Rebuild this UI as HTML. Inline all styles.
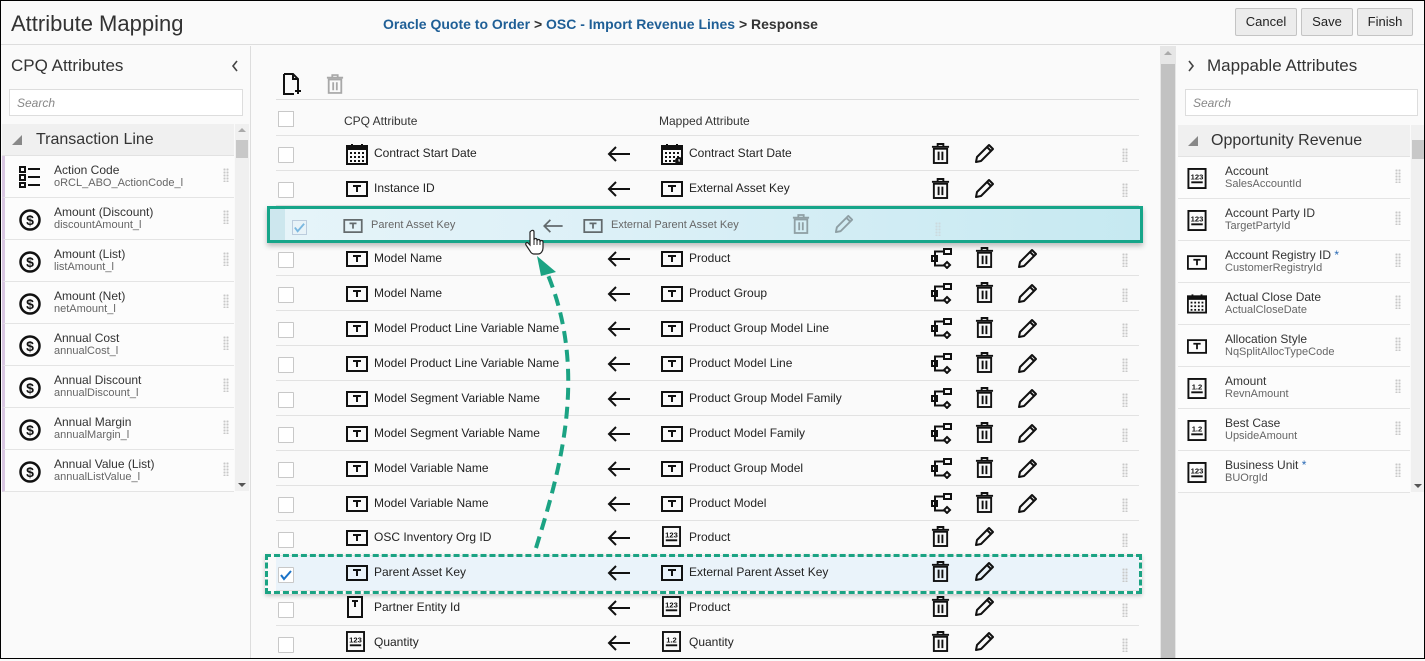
<!DOCTYPE html>
<html><head><meta charset="utf-8">
<style>
*{box-sizing:border-box;margin:0;padding:0}
body{width:1425px;height:659px;overflow:hidden;font-family:"Liberation Sans",Arial,sans-serif;background:#fafafa;position:relative;color:#222}
.frame{position:absolute;left:0;top:0;width:1425px;height:659px;border:1px solid #000;pointer-events:none;z-index:50}
.a{position:absolute}
.hdr{left:0;top:0;width:1425px;height:45px;background:#fafafa;border-bottom:1px solid #ddd}
.btn{position:absolute;top:8px;height:28px;border:1px solid #c4c4c4;background:#ececec;border-radius:2px;font-size:13px;line-height:26px;text-align:center;color:#222}
.lp{left:0;top:46px;width:251px;height:613px;border-right:1px solid #ddd;background:#fafafa}
.rp{left:1176px;top:46px;width:249px;height:613px;background:#fafafa}
.search{position:absolute;height:27px;border:1px solid #ddd;background:#fff;font-size:12px;font-style:italic;color:#888;padding:6px 7px}
.sec{position:absolute;height:32px;background:#f0f0f0;border-bottom:1px solid #e2e2e2;font-size:16px;color:#333;line-height:31px}
.item{position:absolute;height:42px;border-bottom:1px solid #e4e4e4;background:#fcfcfc}
.item .t1{position:absolute;top:7px;font-size:12px;color:#333}
.item .t2{position:absolute;top:21px;font-size:11px;color:#666}
.item svg{position:absolute}
.grip{position:absolute;width:6px;height:14px;background-image:radial-gradient(circle,#c8c8c8 1px,transparent 1.2px);background-size:3px 3px}
.row{position:absolute;left:276px;width:863px;height:35px;border-bottom:1px solid #e2e2e2}
.cb{position:absolute;left:2px;top:11px;width:16px;height:16px;border:1px solid #c8c8c8;background:#fff;border-radius:1px}
.txt{position:absolute;top:10px;font-size:12px;color:#222;white-space:nowrap}
.row svg{position:absolute}
.star{color:#2a6ab5}
</style></head><body>
<svg width="0" height="0" style="position:absolute">
<defs>
<symbol id="T" viewBox="0 0 22 16"><rect x="1" y="1" width="20" height="14" fill="none" stroke="#111" stroke-width="2"/><path d="M7 5h8M11 5v6" stroke="#111" stroke-width="2"/></symbol>
<symbol id="TT" viewBox="0 0 16 22"><rect x="1" y="1" width="14" height="20" fill="none" stroke="#111" stroke-width="2"/><path d="M5 5h6M8 5v6" stroke="#111" stroke-width="2"/></symbol>
<symbol id="cal" viewBox="0 0 22 22"><rect x="1" y="3" width="20" height="18" fill="none" stroke="#111" stroke-width="2"/><rect x="1" y="3" width="20" height="4" fill="#111"/><path d="M6 1v4M16 1v4" stroke="#111" stroke-width="2"/><g fill="#111"><rect x="4" y="9" width="2" height="2"/><rect x="8" y="9" width="2" height="2"/><rect x="12" y="9" width="2" height="2"/><rect x="16" y="9" width="2" height="2"/><rect x="4" y="13" width="2" height="2"/><rect x="8" y="13" width="2" height="2"/><rect x="12" y="13" width="2" height="2"/><rect x="16" y="13" width="2" height="2"/><rect x="4" y="17" width="2" height="2"/><rect x="8" y="17" width="2" height="2"/><rect x="12" y="17" width="2" height="2"/><rect x="16" y="17" width="2" height="2"/></g></symbol>
<symbol id="calc" viewBox="0 0 22 22"><use href="#cal"/><circle cx="18" cy="18" r="4" fill="#111"/><path d="M18 16v2h1" stroke="#fff" stroke-width="1"/></symbol>
<symbol id="n123" viewBox="0 0 20 22"><rect x="1" y="1" width="18" height="20" fill="none" stroke="#111" stroke-width="2"/><text x="10" y="12" font-size="8" font-family="Liberation Sans" text-anchor="middle" font-weight="bold" fill="#111">123</text><path d="M4 15h12" stroke="#111" stroke-width="2"/></symbol>
<symbol id="n12" viewBox="0 0 20 22"><rect x="1" y="1" width="18" height="20" fill="none" stroke="#111" stroke-width="2"/><text x="10" y="12" font-size="8" font-family="Liberation Sans" text-anchor="middle" font-weight="bold" fill="#111">1.2</text><path d="M4 15h12" stroke="#111" stroke-width="2"/></symbol>
<symbol id="trash" viewBox="0 0 20 22"><path d="M1 4h18M7 4V1h6v3" fill="none" stroke="#111" stroke-width="2"/><rect x="3" y="6" width="14" height="15" fill="none" stroke="#111" stroke-width="2"/><path d="M8 9v9M12 9v9" stroke="#111" stroke-width="2"/></symbol>
<symbol id="pen" viewBox="0 0 22 22"><path d="M2 20l1-5L15 3l4 4L7 19z M13 5l4 4" fill="none" stroke="#111" stroke-width="2" stroke-linejoin="round"/></symbol>
<symbol id="tree" viewBox="0 0 22 22"><rect x="13" y="2" width="7" height="5" fill="none" stroke="#111" stroke-width="2"/><path d="M13 4.5H4v14h9" fill="none" stroke="#111" stroke-width="2"/><rect x="1" y="9" width="5" height="5" fill="none" stroke="#111" stroke-width="2"/><path d="M16 15l3 3-3 3-3-3z" fill="none" stroke="#111" stroke-width="2"/></symbol>
<symbol id="arr" viewBox="0 0 24 16"><path d="M23 8H2M9 1L2 8l7 7" fill="none" stroke="#111" stroke-width="2"/></symbol>
<symbol id="dol" viewBox="0 0 22 22"><circle cx="11" cy="11" r="9.5" fill="none" stroke="#111" stroke-width="2.5"/><text x="11" y="16" font-size="14" font-weight="bold" font-family="Liberation Sans" text-anchor="middle" fill="#111">$</text></symbol>
<symbol id="list" viewBox="0 0 22 22"><g fill="none" stroke="#111" stroke-width="2"><rect x="1" y="1" width="5" height="5"/><rect x="1" y="9" width="5" height="5"/><rect x="1" y="17" width="5" height="4"/><path d="M9 3h12M9 11h12M9 19h12"/></g></symbol>
</defs></svg>

<div class="a hdr">
 <div class="a" style="left:11px;top:11px;font-size:22px;color:#333">Attribute Mapping</div>
 <div class="a" style="left:383px;top:16px;font-size:14px;font-weight:bold;color:#1f5f96">Oracle Quote to Order <span style="color:#333">&gt;</span> OSC - Import Revenue Lines <span style="color:#333">&gt; Response</span></div>
 <div class="btn" style="left:1235px;width:62px">Cancel</div>
 <div class="btn" style="left:1301px;width:52px">Save</div>
 <div class="btn" style="left:1357px;width:56px">Finish</div>
</div>

<div class="a lp">
 <div class="a" style="left:11px;top:10px;font-size:17px;color:#333">CPQ Attributes</div>
 <svg class="a" style="left:231px;top:14px" width="8" height="12" viewBox="0 0 8 12"><path d="M6 1L2 6l4 5" fill="none" stroke="#444" stroke-width="1.6"/></svg>
 <div class="search" style="left:9px;top:43px;width:234px">Search</div>
 <div class="sec" style="left:2px;top:78px;width:232px"><span style="position:absolute;left:10px;top:11px;width:0;height:0;border-left:10px solid transparent;border-bottom:10px solid #888"></span><span style="position:absolute;left:34px">Transaction Line</span></div>
 <div class="a" style="left:235px;top:78px;width:14px;height:367px;background:#f0f0f0"></div>
 <div class="a" style="left:236px;top:94px;width:12px;height:18px;background:#c8c8c8"></div>
 <div class="a" style="left:238px;top:82px;width:0;height:0;border:4px solid transparent;border-bottom-color:#aaa;border-top:none"></div>
 <div class="a" style="left:238px;top:437px;width:0;height:0;border:4px solid transparent;border-top-color:#555;border-bottom:none"></div>
</div>
<!-- left items -->
<div class="item" style="left:2px;top:156px;width:232px;border-left:3px solid #d9c7e2"><svg style="left:14px;top:10px" width="22" height="22"><use href="#list"/></svg><div class="t1" style="left:49px">Action Code</div><div class="t2" style="left:49px">oRCL_ABO_ActionCode_l</div><div class="grip" style="left:218px;top:12px"></div></div>
<div class="item" style="left:2px;top:198px;width:232px;border-left:3px solid #d9c7e2"><svg style="left:14px;top:11px" width="22" height="22"><use href="#dol"/></svg><div class="t1" style="left:49px">Amount (Discount)</div><div class="t2" style="left:49px">discountAmount_l</div><div class="grip" style="left:218px;top:12px"></div></div>
<div class="item" style="left:2px;top:240px;width:232px;border-left:3px solid #d9c7e2"><svg style="left:14px;top:11px" width="22" height="22"><use href="#dol"/></svg><div class="t1" style="left:49px">Amount (List)</div><div class="t2" style="left:49px">listAmount_l</div><div class="grip" style="left:218px;top:12px"></div></div>
<div class="item" style="left:2px;top:282px;width:232px;border-left:3px solid #d9c7e2"><svg style="left:14px;top:11px" width="22" height="22"><use href="#dol"/></svg><div class="t1" style="left:49px">Amount (Net)</div><div class="t2" style="left:49px">netAmount_l</div><div class="grip" style="left:218px;top:12px"></div></div>
<div class="item" style="left:2px;top:324px;width:232px;border-left:3px solid #d9c7e2"><svg style="left:14px;top:11px" width="22" height="22"><use href="#dol"/></svg><div class="t1" style="left:49px">Annual Cost</div><div class="t2" style="left:49px">annualCost_l</div><div class="grip" style="left:218px;top:12px"></div></div>
<div class="item" style="left:2px;top:366px;width:232px;border-left:3px solid #d9c7e2"><svg style="left:14px;top:11px" width="22" height="22"><use href="#dol"/></svg><div class="t1" style="left:49px">Annual Discount</div><div class="t2" style="left:49px">annualDiscount_l</div><div class="grip" style="left:218px;top:12px"></div></div>
<div class="item" style="left:2px;top:408px;width:232px;border-left:3px solid #d9c7e2"><svg style="left:14px;top:11px" width="22" height="22"><use href="#dol"/></svg><div class="t1" style="left:49px">Annual Margin</div><div class="t2" style="left:49px">annualMargin_l</div><div class="grip" style="left:218px;top:12px"></div></div>
<div class="item" style="left:2px;top:450px;width:232px;border-left:3px solid #d9c7e2"><svg style="left:14px;top:11px" width="22" height="22"><use href="#dol"/></svg><div class="t1" style="left:49px">Annual Value (List)</div><div class="t2" style="left:49px">annualListValue_l</div><div class="grip" style="left:218px;top:12px"></div></div>

<!-- center -->
<svg class="a" style="left:282px;top:73px" width="20" height="22" viewBox="0 0 20 22"><path d="M2 1h9l5 5v9M11 1v5h5M2 1v20h10" fill="none" stroke="#111" stroke-width="2"/><path d="M16 15v6M13 18h6" stroke="#111" stroke-width="2"/></svg>
<svg class="a" style="left:326px;top:74px;opacity:.35" width="18" height="20" viewBox="0 0 20 22"><use href="#trash"/></svg>
<div class="a" style="left:276px;top:99px;width:863px;height:1px;background:#ddd"></div>
<div class="a" style="left:278px;top:111px;width:16px;height:16px;border:1px solid #c8c8c8;background:#fff"></div>
<div class="a" style="left:344px;top:114px;font-size:12px;color:#333">CPQ Attribute</div>
<div class="a" style="left:659px;top:114px;font-size:12px;color:#333">Mapped Attribute</div>
<div class="a" style="left:276px;top:135px;width:863px;height:1px;background:#e2e2e2"></div>

<div class="row" style="top:136px"><div class="cb"></div><svg style="left:70px;top:7px" width="22" height="22"><use href="#cal"/></svg><div class="txt" style="left:98px">Contract Start Date</div><svg style="left:331px;top:10px" width="24" height="16"><use href="#arr"/></svg><svg style="left:385px;top:7px" width="22" height="22"><use href="#calc"/></svg><div class="txt" style="left:413px">Contract Start Date</div><svg style="left:655px;top:7px" width="19" height="21"><use href="#trash"/></svg><svg style="left:698px;top:6px" width="22" height="22"><use href="#pen"/></svg><div class="grip" style="left:846px;top:12px"></div></div>
<div class="row" style="top:171px"><div class="cb"></div><svg style="left:70px;top:10px" width="22" height="16"><use href="#T"/></svg><div class="txt" style="left:98px">Instance ID</div><svg style="left:331px;top:10px" width="24" height="16"><use href="#arr"/></svg><svg style="left:385px;top:10px" width="22" height="16"><use href="#T"/></svg><div class="txt" style="left:413px">External Asset Key</div><svg style="left:655px;top:7px" width="19" height="21"><use href="#trash"/></svg><svg style="left:698px;top:6px" width="22" height="22"><use href="#pen"/></svg><div class="grip" style="left:846px;top:12px"></div></div>

<div class="row" style="top:241px"><div class="cb"></div><svg style="left:70px;top:10px" width="22" height="16"><use href="#T"/></svg><div class="txt" style="left:98px">Model Name</div><svg style="left:331px;top:10px" width="24" height="16"><use href="#arr"/></svg><svg style="left:385px;top:10px" width="22" height="16"><use href="#T"/></svg><div class="txt" style="left:413px">Product</div><svg style="left:655px;top:6px" width="22" height="22"><use href="#tree"/></svg><svg style="left:699px;top:6px" width="19" height="21"><use href="#trash"/></svg><svg style="left:741px;top:6px" width="22" height="22"><use href="#pen"/></svg><div class="grip" style="left:846px;top:12px"></div></div>
<div class="row" style="top:276px"><div class="cb"></div><svg style="left:70px;top:10px" width="22" height="16"><use href="#T"/></svg><div class="txt" style="left:98px">Model Name</div><svg style="left:331px;top:10px" width="24" height="16"><use href="#arr"/></svg><svg style="left:385px;top:10px" width="22" height="16"><use href="#T"/></svg><div class="txt" style="left:413px">Product Group</div><svg style="left:655px;top:6px" width="22" height="22"><use href="#tree"/></svg><svg style="left:699px;top:6px" width="19" height="21"><use href="#trash"/></svg><svg style="left:741px;top:6px" width="22" height="22"><use href="#pen"/></svg><div class="grip" style="left:846px;top:12px"></div></div>
<div class="row" style="top:311px"><div class="cb"></div><svg style="left:70px;top:10px" width="22" height="16"><use href="#T"/></svg><div class="txt" style="left:98px">Model Product Line Variable Name</div><svg style="left:331px;top:10px" width="24" height="16"><use href="#arr"/></svg><svg style="left:385px;top:10px" width="22" height="16"><use href="#T"/></svg><div class="txt" style="left:413px">Product Group Model Line</div><svg style="left:655px;top:6px" width="22" height="22"><use href="#tree"/></svg><svg style="left:699px;top:6px" width="19" height="21"><use href="#trash"/></svg><svg style="left:741px;top:6px" width="22" height="22"><use href="#pen"/></svg><div class="grip" style="left:846px;top:12px"></div></div>
<div class="row" style="top:346px"><div class="cb"></div><svg style="left:70px;top:10px" width="22" height="16"><use href="#T"/></svg><div class="txt" style="left:98px">Model Product Line Variable Name</div><svg style="left:331px;top:10px" width="24" height="16"><use href="#arr"/></svg><svg style="left:385px;top:10px" width="22" height="16"><use href="#T"/></svg><div class="txt" style="left:413px">Product Model Line</div><svg style="left:655px;top:6px" width="22" height="22"><use href="#tree"/></svg><svg style="left:699px;top:6px" width="19" height="21"><use href="#trash"/></svg><svg style="left:741px;top:6px" width="22" height="22"><use href="#pen"/></svg><div class="grip" style="left:846px;top:12px"></div></div>
<div class="row" style="top:381px"><div class="cb"></div><svg style="left:70px;top:10px" width="22" height="16"><use href="#T"/></svg><div class="txt" style="left:98px">Model Segment Variable Name</div><svg style="left:331px;top:10px" width="24" height="16"><use href="#arr"/></svg><svg style="left:385px;top:10px" width="22" height="16"><use href="#T"/></svg><div class="txt" style="left:413px">Product Group Model Family</div><svg style="left:655px;top:6px" width="22" height="22"><use href="#tree"/></svg><svg style="left:699px;top:6px" width="19" height="21"><use href="#trash"/></svg><svg style="left:741px;top:6px" width="22" height="22"><use href="#pen"/></svg><div class="grip" style="left:846px;top:12px"></div></div>
<div class="row" style="top:416px"><div class="cb"></div><svg style="left:70px;top:10px" width="22" height="16"><use href="#T"/></svg><div class="txt" style="left:98px">Model Segment Variable Name</div><svg style="left:331px;top:10px" width="24" height="16"><use href="#arr"/></svg><svg style="left:385px;top:10px" width="22" height="16"><use href="#T"/></svg><div class="txt" style="left:413px">Product Model Family</div><svg style="left:655px;top:6px" width="22" height="22"><use href="#tree"/></svg><svg style="left:699px;top:6px" width="19" height="21"><use href="#trash"/></svg><svg style="left:741px;top:6px" width="22" height="22"><use href="#pen"/></svg><div class="grip" style="left:846px;top:12px"></div></div>
<div class="row" style="top:451px"><div class="cb"></div><svg style="left:70px;top:10px" width="22" height="16"><use href="#T"/></svg><div class="txt" style="left:98px">Model Variable Name</div><svg style="left:331px;top:10px" width="24" height="16"><use href="#arr"/></svg><svg style="left:385px;top:10px" width="22" height="16"><use href="#T"/></svg><div class="txt" style="left:413px">Product Group Model</div><svg style="left:655px;top:6px" width="22" height="22"><use href="#tree"/></svg><svg style="left:699px;top:6px" width="19" height="21"><use href="#trash"/></svg><svg style="left:741px;top:6px" width="22" height="22"><use href="#pen"/></svg><div class="grip" style="left:846px;top:12px"></div></div>
<div class="row" style="top:486px"><div class="cb"></div><svg style="left:70px;top:10px" width="22" height="16"><use href="#T"/></svg><div class="txt" style="left:98px">Model Variable Name</div><svg style="left:331px;top:10px" width="24" height="16"><use href="#arr"/></svg><svg style="left:385px;top:10px" width="22" height="16"><use href="#T"/></svg><div class="txt" style="left:413px">Product Model</div><svg style="left:655px;top:6px" width="22" height="22"><use href="#tree"/></svg><svg style="left:699px;top:6px" width="19" height="21"><use href="#trash"/></svg><svg style="left:741px;top:6px" width="22" height="22"><use href="#pen"/></svg><div class="grip" style="left:846px;top:12px"></div></div>
<div class="row" style="top:521px"><div class="cb"></div><svg style="left:70px;top:9px" width="22" height="16"><use href="#T"/></svg><div class="txt" style="left:98px;top:9px">OSC Inventory Org ID</div><svg style="left:331px;top:9px" width="24" height="16"><use href="#arr"/></svg><svg style="left:386px;top:5px" width="19" height="21"><use href="#n123"/></svg><div class="txt" style="left:413px;top:9px">Product</div><svg style="left:655px;top:5px" width="19" height="21"><use href="#trash"/></svg><svg style="left:698px;top:4px" width="22" height="22"><use href="#pen"/></svg><div class="grip" style="left:846px;top:12px"></div></div>
<div class="row" style="top:556px;background:#eaf3fa"><div class="cb" style="border-color:#c8c8c8"><svg width="14" height="14" viewBox="0 0 14 14" style="left:0;top:0"><path d="M2 7l3 4 7-8" fill="none" stroke="#1a73c8" stroke-width="2"/></svg></div><svg style="left:70px;top:9px" width="22" height="16"><use href="#T"/></svg><div class="txt" style="left:98px;top:9px">Parent Asset Key</div><svg style="left:331px;top:9px" width="24" height="16"><use href="#arr"/></svg><svg style="left:385px;top:9px" width="22" height="16"><use href="#T"/></svg><div class="txt" style="left:413px;top:9px">External Parent Asset Key</div><svg style="left:655px;top:5px" width="19" height="21"><use href="#trash"/></svg><svg style="left:698px;top:4px" width="22" height="22"><use href="#pen"/></svg><div class="grip" style="left:846px;top:12px"></div></div>
<div class="row" style="top:591px"><div class="cb"></div><svg style="left:71px;top:5px" width="16" height="22"><use href="#TT"/></svg><div class="txt" style="left:98px;top:9px">Partner Entity Id</div><svg style="left:331px;top:9px" width="24" height="16"><use href="#arr"/></svg><svg style="left:386px;top:5px" width="19" height="21"><use href="#n123"/></svg><div class="txt" style="left:413px;top:9px">Product</div><svg style="left:655px;top:5px" width="19" height="21"><use href="#trash"/></svg><svg style="left:698px;top:4px" width="22" height="22"><use href="#pen"/></svg><div class="grip" style="left:846px;top:12px"></div></div>
<div class="row" style="top:626px;border-bottom:none"><div class="cb"></div><svg style="left:70px;top:5px" width="19" height="21"><use href="#n123"/></svg><div class="txt" style="left:98px;top:9px">Quantity</div><svg style="left:331px;top:9px" width="24" height="16"><use href="#arr"/></svg><svg style="left:386px;top:5px" width="19" height="21"><use href="#n12"/></svg><div class="txt" style="left:413px;top:9px">Quantity</div><svg style="left:655px;top:5px" width="19" height="21"><use href="#trash"/></svg><svg style="left:698px;top:4px" width="22" height="22"><use href="#pen"/></svg><div class="grip" style="left:846px;top:12px"></div></div>

<div class="a" style="left:265px;top:554px;width:877px;height:40px;border:3px dashed #1ba383;box-shadow:0 2px 4px rgba(0,0,0,.2)"></div>

<div class="a" style="left:267px;top:206px;width:876px;height:37px;border:3px solid #16a589;background:linear-gradient(90deg,#e6f4f9 0%,#dcf0f7 40%,#c6e9f1 100%);box-shadow:0 3px 5px rgba(0,0,0,.25)">
 <div class="a" style="left:0;top:0;width:15px;height:31px;background:#cde7ee"></div>
 <div class="a" style="left:22px;top:11px;width:15px;height:15px;border:1px solid #bcd;background:#e8f3f8"><svg width="13" height="13" viewBox="0 0 14 14" style="position:absolute;left:0;top:0"><path d="M2 7l3 4 7-8" fill="none" stroke="#7ab8e0" stroke-width="2"/></svg></div>
 <svg style="position:absolute;left:73px;top:10px;opacity:.6" width="20" height="14"><use href="#T"/></svg>
 <div class="a" style="left:101px;top:10px;font-size:11px;color:#666">Parent Asset Key</div>
 <svg style="position:absolute;left:272px;top:10px;opacity:.6" width="22" height="14"><use href="#arr"/></svg>
 <svg style="position:absolute;left:313px;top:10px;opacity:.6" width="20" height="14"><use href="#T"/></svg>
 <div class="a" style="left:341px;top:10px;font-size:11px;color:#666">External Parent Asset Key</div>
 <svg style="position:absolute;left:522px;top:5px;opacity:.35" width="18" height="20"><use href="#trash"/></svg>
 <svg style="position:absolute;left:564px;top:4px;opacity:.35" width="21" height="21"><use href="#pen"/></svg>
 <div class="grip" style="left:665px;top:13px;opacity:.5"></div>
</div>

<svg class="a" style="left:500px;top:240px" width="100" height="320" viewBox="500 240 100 320">
 <path d="M536 548 C560 470 590 370 545 268" fill="none" stroke="#1ba383" stroke-width="4" stroke-dasharray="12 7"/>
 <path d="M537 256 L556 272 L541 276 Z" fill="#1ba383"/>
</svg>
<svg class="a" style="left:525px;top:229px" width="20" height="26" viewBox="0 0 20 26"><path d="M6 2c1-1 3-1 3 1v8c0-2 3-2 3 0v1c0-2 3-2 3 0v1c0-2 3-2 3 0v6c0 3-2 6-5 6H9c-2 0-3-1-4-3l-4-6c-1-2 1-3 2-2l2 2V3z" fill="#fff" stroke="#222" stroke-width="1.2"/><path d="M9 11v5M12 12v4M15 13v3" stroke="#222" stroke-width="1"/></svg>

<div class="a" style="left:1160px;top:46px;width:16px;height:613px;background:#e6e6e6"></div>
<div class="a" style="left:1161px;top:64px;width:14px;height:595px;background:#c2c2c2"></div>
<div class="a" style="left:1164px;top:51px;width:0;height:0;border:4px solid transparent;border-bottom-color:#aaa;border-top:none"></div>

<div class="a rp">
 <svg class="a" style="left:11px;top:14px" width="8" height="12" viewBox="0 0 8 12"><path d="M2 1l4 5-4 5" fill="none" stroke="#444" stroke-width="1.6"/></svg>
 <div class="a" style="left:31px;top:10px;font-size:17px;color:#333">Mappable Attributes</div>
 <div class="search" style="left:9px;top:43px;width:233px">Search</div>
 <div class="sec" style="left:2px;top:79px;width:232px"><span style="position:absolute;left:10px;top:11px;width:0;height:0;border-left:10px solid transparent;border-bottom:10px solid #888"></span><span style="position:absolute;left:33px">Opportunity Revenue</span></div>
 <div class="a" style="left:235px;top:79px;width:14px;height:367px;background:#f0f0f0"></div>
 <div class="a" style="left:236px;top:94px;width:12px;height:19px;background:#c8c8c8"></div>
 <div class="a" style="left:238px;top:438px;width:0;height:0;border:4px solid transparent;border-top-color:#555;border-bottom:none"></div>
</div>
<div class="item" style="left:1178px;top:157px;width:232px"><svg style="left:9px;top:11px" width="20" height="21"><use href="#n123"/></svg><div class="t1" style="left:47px">Account</div><div class="t2" style="left:47px">SalesAccountId</div><div class="grip" style="left:217px;top:12px"></div></div>
<div class="item" style="left:1178px;top:199px;width:232px"><svg style="left:9px;top:11px" width="20" height="21"><use href="#n123"/></svg><div class="t1" style="left:47px">Account Party ID</div><div class="t2" style="left:47px">TargetPartyId</div><div class="grip" style="left:217px;top:12px"></div></div>
<div class="item" style="left:1178px;top:241px;width:232px"><svg style="left:9px;top:14px" width="20" height="15"><use href="#T"/></svg><div class="t1" style="left:47px">Account Registry ID <span class="star">*</span></div><div class="t2" style="left:47px">CustomerRegistryId</div><div class="grip" style="left:217px;top:12px"></div></div>
<div class="item" style="left:1178px;top:283px;width:232px"><svg style="left:9px;top:10px" width="20" height="21"><use href="#cal"/></svg><div class="t1" style="left:47px">Actual Close Date</div><div class="t2" style="left:47px">ActualCloseDate</div><div class="grip" style="left:217px;top:12px"></div></div>
<div class="item" style="left:1178px;top:325px;width:232px"><svg style="left:9px;top:14px" width="20" height="15"><use href="#T"/></svg><div class="t1" style="left:47px">Allocation Style</div><div class="t2" style="left:47px">NqSplitAllocTypeCode</div><div class="grip" style="left:217px;top:12px"></div></div>
<div class="item" style="left:1178px;top:367px;width:232px"><svg style="left:9px;top:11px" width="20" height="21"><use href="#n12"/></svg><div class="t1" style="left:47px">Amount</div><div class="t2" style="left:47px">RevnAmount</div><div class="grip" style="left:217px;top:12px"></div></div>
<div class="item" style="left:1178px;top:409px;width:232px"><svg style="left:9px;top:11px" width="20" height="21"><use href="#n12"/></svg><div class="t1" style="left:47px">Best Case</div><div class="t2" style="left:47px">UpsideAmount</div><div class="grip" style="left:217px;top:12px"></div></div>
<div class="item" style="left:1178px;top:451px;width:232px"><svg style="left:9px;top:11px" width="20" height="21"><use href="#n123"/></svg><div class="t1" style="left:47px">Business Unit <span class="star">*</span></div><div class="t2" style="left:47px">BUOrgId</div><div class="grip" style="left:217px;top:12px"></div></div>

<div class="frame"></div>
</body></html>
